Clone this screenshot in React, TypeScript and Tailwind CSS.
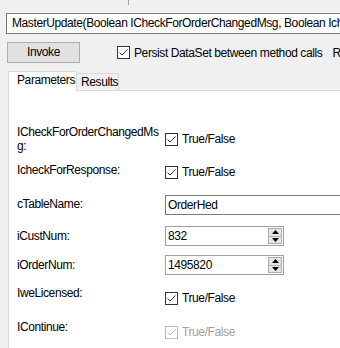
import React from 'react';

function Check({ disabled = false }: { disabled?: boolean }) {
  return (
    <div className="flex items-center">
      <div
        className={
          disabled
            ? 'w-[13px] h-[13px] border border-[#bcbcbc] bg-white flex items-center justify-center'
            : 'w-[13px] h-[13px] border border-[#333333] bg-white flex items-center justify-center'
        }
      >
        <svg width="11" height="11" viewBox="0 0 11 11">
          <polyline
            points="1.5,5.5 4,8 9.5,2.5"
            fill="none"
            stroke={disabled ? '#bcbcbc' : '#333333'}
            strokeWidth="1"
          />
        </svg>
      </div>
      <span className={disabled ? 'ml-[4px] text-[#a0a0a0]' : 'ml-[4px] text-black'}>True/False</span>
    </div>
  );
}

function Spin({ value }: { value: string }) {
  return (
    <div className="w-[119px] h-[20px] border border-[#a0a0a0] bg-white flex">
      <div className="flex-1 pl-[2px] leading-[18px]">{value}</div>
      <div className="w-[15px] flex flex-col py-[1px] pr-[1px]">
        <div className="flex-1 bg-[#e5e5e5] border border-[#acacac] flex items-center justify-center">
          <svg width="7" height="4" viewBox="0 0 7 4">
            <polygon points="0,4 7,4 3.5,0" fill="#000" />
          </svg>
        </div>
        <div className="flex-1 bg-[#e5e5e5] border border-[#acacac] border-t-0 flex items-center justify-center">
          <svg width="7" height="4" viewBox="0 0 7 4">
            <polygon points="0,0 7,0 3.5,4" fill="#000" />
          </svg>
        </div>
      </div>
    </div>
  );
}

export default function App() {
  const label = 'w-[156px] shrink-0 pl-[8px] pr-[8px] leading-[14px]';
  return (
    <div className="w-[340px] h-[348px] overflow-hidden bg-[#f0f0f0] text-[12px] tracking-[-0.4px] text-black font-['Liberation_Sans',Arial,sans-serif]">
      {/* cut off strip above */}
      <div className="h-[13px]">
        <div className="ml-[128px] w-px h-[5px] bg-[#a0a0a0]" />
      </div>

      <div className="ml-[6px] w-[340px] h-[21px] border border-[#7a7a7a] bg-white pl-[5px] leading-[19px] whitespace-nowrap overflow-hidden">
        MasterUpdate(Boolean ICheckForOrderChangedMsg, Boolean IcheckForResponse)
      </div>

      <div className="mt-[8px] flex items-center">
        <button className="ml-[7px] shrink-0 w-[73px] h-[21px] bg-[#e1e1e1] border border-[#adadad] leading-[19px] text-center">
          Invoke
        </button>
        <div className="ml-[37px] shrink-0 flex items-center whitespace-nowrap">
          <div className="w-[13px] h-[13px] border border-[#333333] bg-white flex items-center justify-center">
            <svg width="11" height="11" viewBox="0 0 11 11">
              <polyline points="1.5,5.5 4,8 9.5,2.5" fill="none" stroke="#333333" strokeWidth="1" />
            </svg>
          </div>
          <span className="ml-[4px]">Persist DataSet between method calls</span>
          <span className="ml-[10px]">Re</span>
        </div>
      </div>

      {/* tabs */}
      <div className="mt-[7px] ml-[8px] flex items-end h-[20px]">
        <div className="w-[69px] h-[20px] bg-white border border-[#d9d9d9] border-b-0 pl-[8px] leading-[16px] relative z-10 -mb-px pb-px">
          Parameters
        </div>
        <div className="w-[42px] h-[17px] bg-[#f0f0f0] border border-[#d9d9d9] border-l-0 border-b-0 pl-[4px] leading-[16px]">
          Results
        </div>
      </div>

      <div className="ml-[8px] w-[340px] h-[300px] bg-white border border-[#d9d9d9] pt-[34px]">
        <div className="flex h-[38px]">
          <div className={label}>
            ICheckForOrderChangedMs
            <br />
            g:
          </div>
          <div className="mt-[5px]">
            <Check />
          </div>
        </div>
        <div className="flex h-[32px]">
          <div className={label}>IcheckForResponse:</div>
          <div className="mt-[0px]">
            <Check />
          </div>
        </div>
        <div className="flex h-[31px]">
          <div className={label + ' mt-[2px]'}>cTableName:</div>
          <div className="w-[200px] h-[20px] border border-[#7a7a7a] bg-white pl-[2px] leading-[18px]">
            OrderHed
          </div>
        </div>
        <div className="flex h-[29px]">
          <div className={label + ' mt-[3px]'}>iCustNum:</div>
          <Spin value="832" />
        </div>
        <div className="flex h-[31px]">
          <div className={label + ' mt-[3px]'}>iOrderNum:</div>
          <Spin value="1495820" />
        </div>
        <div className="flex h-[34px]">
          <div className={label}>IweLicensed:</div>
          <div className="mt-[3px]">
            <Check />
          </div>
        </div>
        <div className="flex h-[30px]">
          <div className={label}>IContinue:</div>
          <div className="mt-[3px]">
            <Check disabled />
          </div>
        </div>
      </div>
    </div>
  );
}
